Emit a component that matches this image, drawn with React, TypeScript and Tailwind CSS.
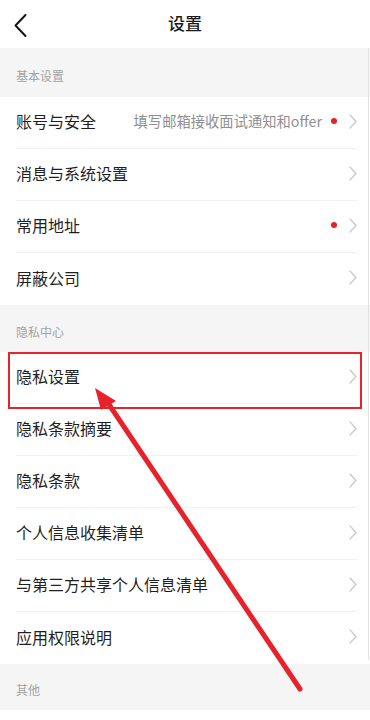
// Settings screen with an annotation (red box + arrow) drawn over the
// "隐私设置" row.

type Row = {
  label: string;
  hint?: string;
  dot?: boolean;
};

const basic: Row[] = [
  { label: "账号与安全", hint: "填写邮箱接收面试通知和offer", dot: true },
  { label: "消息与系统设置" },
  { label: "常用地址", dot: true },
  { label: "屏蔽公司" },
];

const privacy: Row[] = [
  { label: "隐私设置" },
  { label: "隐私条款摘要" },
  { label: "隐私条款" },
  { label: "个人信息收集清单" },
  { label: "与第三方共享个人信息清单" },
  { label: "应用权限说明" },
];

function Chevron() {
  return (
    <svg width="8" height="15" viewBox="0 0 8 15" className="shrink-0">
      <path
        d="M1 1 L7 7.5 L1 14"
        fill="none"
        stroke="#c9c9c9"
        strokeWidth="1.3"
        strokeLinecap="round"
        strokeLinejoin="round"
      />
    </svg>
  );
}

function SectionLabel({ text, h }: { text: string; h: string }) {
  return (
    <div className={`flex items-center bg-[#f5f5f5] pl-4 pt-[6px] ${h}`}>
      <span className="text-[12px] text-[#a3a3a3]">{text}</span>
    </div>
  );
}

function SettingRow({ row, last }: { row: Row; last: boolean }) {
  return (
    <div className="pl-4 pr-[13px]">
      <div
        className={`flex h-[52px] items-center gap-3 pb-[3px] ${
          last ? "" : "border-b border-[#f1f1f1]"
        }`}
      >
        <span className="flex-1 text-[16px] text-[#1f1f1f]">{row.label}</span>
        {row.hint ? (
          <span className="-mr-[3px] text-[14.3px] text-[#8f8f8f]">
            {row.hint}
          </span>
        ) : null}
        {row.dot ? (
          <span className="size-[6px] rounded-full bg-[#e8231f]" />
        ) : null}
        <Chevron />
      </div>
    </div>
  );
}

export default function App() {
  return (
    <div
      className="relative min-h-[720px] w-full overflow-hidden bg-white"
      style={{ fontFamily: '"Noto Sans CJK SC", "Noto Sans", sans-serif' }}
    >
      <header className="grid h-[48px] grid-cols-[48px_1fr_48px] items-center">
        <svg width="48" height="48" viewBox="0 0 48 48">
          <path
            d="M25.5 15 L15.5 25.5 L25.5 36"
            fill="none"
            stroke="#111"
            strokeWidth="1.9"
            strokeLinecap="round"
            strokeLinejoin="round"
          />
        </svg>
        <h1 className="pb-[2px] text-center text-[17px] font-medium text-[#1a1a1a]">
          设置
        </h1>
        <span />
      </header>

      <SectionLabel text="基本设置" h="h-[49px]" />
      {basic.map((row, i) => (
        <SettingRow key={row.label} row={row} last={i === basic.length - 1} />
      ))}

      <SectionLabel text="隐私中心" h="h-[47px]" />
      {privacy.map((row, i) => (
        <SettingRow
          key={row.label}
          row={row}
          last={i === privacy.length - 1}
        />
      ))}

      <SectionLabel text="其他" h="h-[46px]" />

      {/* scrollbar track on the right edge */}
      <div className="pointer-events-none absolute right-[1px] top-[48px] h-[612px] w-[1px] bg-[#e2e2e2]" />

      {/* annotation: highlight box */}
      <div className="pointer-events-none absolute left-[8px] top-[352px] h-[57px] w-[354px] border-2 border-[#e5252b]" />

      {/* annotation: arrow */}
      <svg
        className="pointer-events-none absolute left-0 top-0"
        width="370"
        height="720"
        viewBox="0 0 370 720"
      >
        <line
          x1="108"
          y1="403"
          x2="300"
          y2="689"
          stroke="#e8222a"
          strokeWidth="5"
          strokeLinecap="round"
        />
        <polygon points="95,388 116,401 101,410" fill="#e8222a" />
      </svg>
    </div>
  );
}
